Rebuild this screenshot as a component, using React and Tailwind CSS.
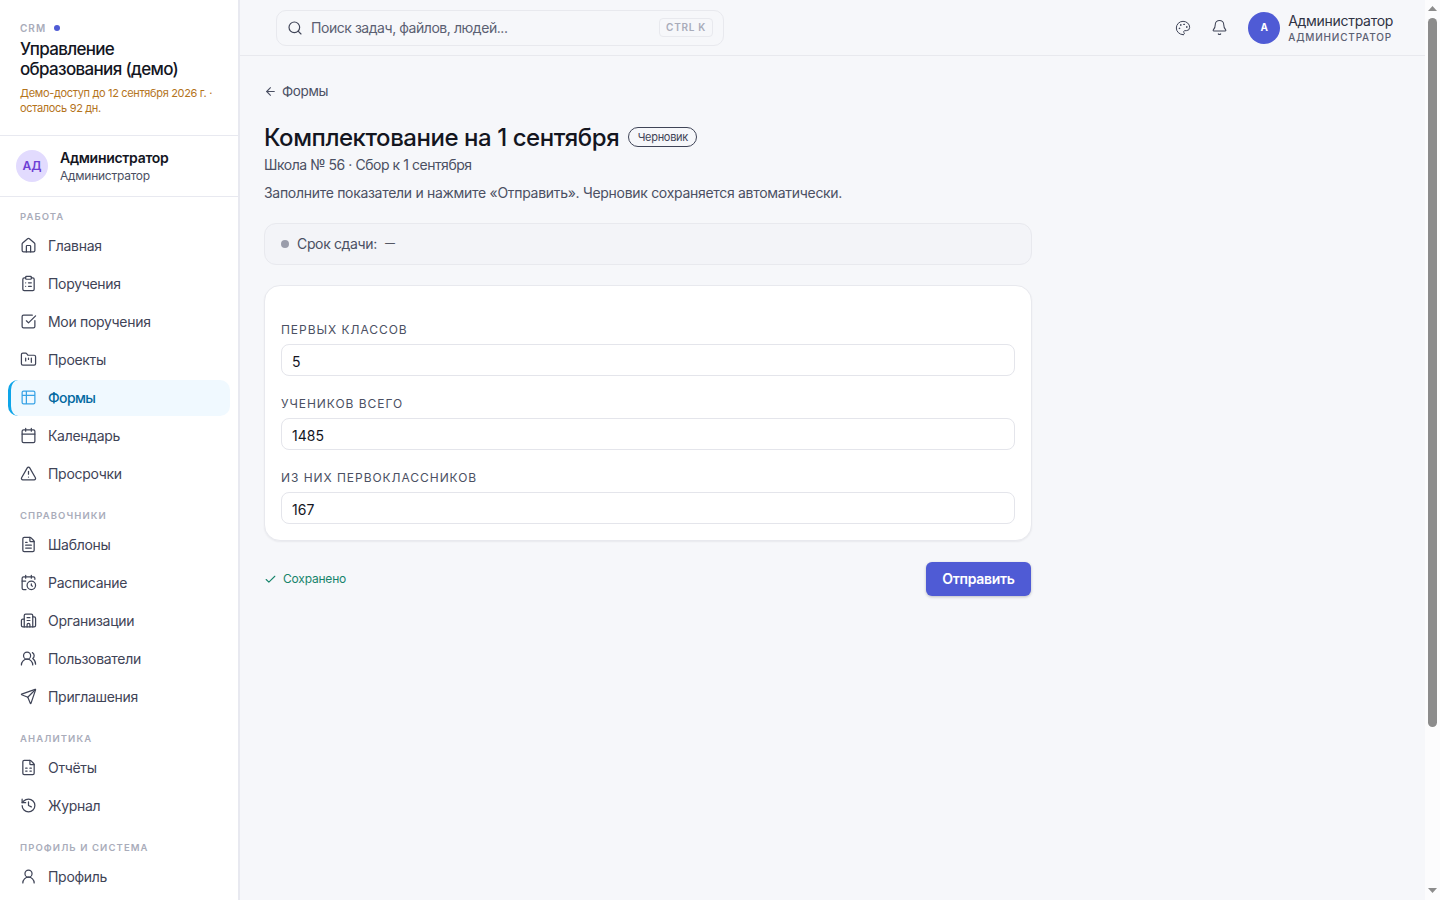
import React from "react";
import {
  ArrowLeft,
  Bell,
  Building2,
  CalendarClock,
  Calendar,
  Check,
  ClipboardList,
  FileSpreadsheet,
  FileText,
  FolderKanban,
  History,
  House,
  Palette,
  Search,
  Send,
  SquareCheckBig,
  Table2,
  TriangleAlert,
  UserRound,
  UsersRound,
} from "lucide-react";

const groups = [
  {
    title: "РАБОТА",
    items: [
      { label: "Главная", icon: House },
      { label: "Поручения", icon: ClipboardList },
      { label: "Мои поручения", icon: SquareCheckBig },
      { label: "Проекты", icon: FolderKanban },
      { label: "Формы", icon: Table2, active: true },
      { label: "Календарь", icon: Calendar },
      { label: "Просрочки", icon: TriangleAlert },
    ],
  },
  {
    title: "СПРАВОЧНИКИ",
    items: [
      { label: "Шаблоны", icon: FileText },
      { label: "Расписание", icon: CalendarClock },
      { label: "Организации", icon: Building2 },
      { label: "Пользователи", icon: UsersRound },
      { label: "Приглашения", icon: Send },
    ],
  },
  {
    title: "АНАЛИТИКА",
    items: [
      { label: "Отчёты", icon: FileSpreadsheet },
      { label: "Журнал", icon: History },
    ],
  },
  {
    title: "ПРОФИЛЬ И СИСТЕМА",
    items: [{ label: "Профиль", icon: UserRound }],
  },
];

const fields = [
  { label: "ПЕРВЫХ КЛАССОВ", value: "5" },
  { label: "УЧЕНИКОВ ВСЕГО", value: "1485" },
  { label: "ИЗ НИХ ПЕРВОКЛАССНИКОВ", value: "167" },
];

const NavItem = ({ item }) => {
  const Icon = item.icon;
  return (
    <div
      className={
        item.active
          ? "flex h-9 items-center gap-[11px] rounded-[10px] border-l-[3px] border-[#0ea5e9] bg-[#f0f9ff] pl-[9px] font-medium text-[#0369a1]"
          : "flex h-9 items-center gap-[11px] rounded-[10px] pl-3 text-[#3f4457]"
      }
    >
      <Icon size={17} strokeWidth={1.75} className={item.active ? "text-[#38a3e6]" : "text-[#3f4457]"} />
      <span className={item.active ? "text-[14px] tracking-[-0.6px]" : "text-[14px] tracking-[-0.3px]"}>{item.label}</span>
    </div>
  );
};

const Sidebar = () => (
  <aside className="h-screen w-[240px] shrink-0 overflow-hidden border-r-2 border-[#e8e9f0] bg-white">
    <div className="h-[136px] border-b border-[#e8e9f0] px-5 pt-[21px]">
      <div className="flex h-[14px] items-center gap-2">
        <span className="text-[10px] font-semibold tracking-[1px] text-[#a9acba]">CRM</span>
        <span className="h-[6px] w-[6px] rounded-full bg-[#4f5bd5]"></span>
      </div>
      <div className="mt-[4px] text-[17px] leading-[20px] font-medium tracking-[-0.67px] text-[#14161f]">
        Управление образования (демо)
      </div>
      <div className="mt-[7px] w-[200px] text-[11px] leading-[15px] tracking-[-0.33px] text-[#b4741c]">
        Демо-доступ до 12 сентября 2026 г. · осталось 92 дн.
      </div>
    </div>
    <div className="flex h-[61px] items-center gap-3 border-b border-[#e8e9f0] px-4">
      <div className="flex h-8 w-8 items-center justify-center rounded-full bg-[#e2dbfe] text-[12px] font-semibold text-[#6d3fd4]">
        АД
      </div>
      <div>
        <div className="text-[14px] leading-[18px] font-semibold tracking-[-0.3px] text-[#14161f]">Администратор</div>
        <div className="mt-[1px] text-[12px] leading-[16px] tracking-[-0.25px] text-[#4b5063]">Администратор</div>
      </div>
    </div>
    <nav className="flex flex-col gap-[17.5px] px-2 pt-[13px]">
      {groups.map((group) => (
        <div key={group.title}>
          <div className="flex h-[14px] items-center pl-3 text-[9.5px] font-semibold tracking-[1.1px] text-[#a9acba]">
            {group.title}
          </div>
          <div className="mt-[3.5px] flex flex-col gap-[2px]">
            {group.items.map((item) => (
              <NavItem key={item.label} item={item} />
            ))}
          </div>
        </div>
      ))}
    </nav>
  </aside>
);

const Topbar = () => (
  <header className="flex h-[56px] shrink-0 items-center justify-between border-b border-[#e8e9ee] pr-[32px] pl-[36px]">
    <div className="flex h-9 w-[448px] items-center rounded-[10px] border border-[#e8e9ee] bg-[#f6f7fa] pr-[10px] pl-[10px]">
      <Search size={16} strokeWidth={1.75} className="text-[#3f4457]" />
      <span className="ml-[8px] flex-1 text-[14px] tracking-[-0.45px] text-[#5b6072]">Поиск задач, файлов, людей...</span>
      <span className="flex h-[19px] items-center rounded-[4px] border border-[#e8e9ee] px-[6px] text-[10px] font-semibold tracking-[0.7px] text-[#a9acba]">
        CTRL K
      </span>
    </div>
    <div className="flex items-center">
      <Palette size={16} strokeWidth={1.5} className="text-[#3f4457]" />
      <Bell size={17} strokeWidth={1.5} className="ml-[20px] text-[#3f4457]" />
      <div className="ml-[20px] flex h-8 w-8 items-center justify-center rounded-full bg-[#4f5bd5] text-[10px] font-bold text-white">
        А
      </div>
      <div className="ml-2">
        <div className="text-[14px] leading-[18px] tracking-[-0.3px] text-[#2f3344]">Администратор</div>
        <div className="mt-[1px] text-[10px] leading-[13px] font-medium tracking-[0.8px] text-[#5b6072]">АДМИНИСТРАТОР</div>
      </div>
    </div>
  </header>
);

// the page scrollbar of the screenshot: arrows and thumb
const Scrollbar = () => (
  <div className="flex h-screen w-[15px] shrink-0 flex-col items-center bg-[#fcfcfd]">
    <svg width="9" height="5" viewBox="0 0 9 5" className="mt-[6px] shrink-0">
      <path d="M4.5 0L9 5H0z" fill="#8c8c8c" />
    </svg>
    <div className="mt-[7px] h-[709px] w-[9px] rounded-t-[5px] rounded-b-[5px] bg-[#8c8c8c]"></div>
    <svg width="9" height="5" viewBox="0 0 9 5" className="mt-auto mb-[7px] shrink-0">
      <path d="M0 0H9L4.5 5z" fill="#8c8c8c" />
    </svg>
  </div>
);

const App = () => {
  return (
    <div className="flex h-screen overflow-hidden bg-[#f6f7fa] font-['Inter','Noto_Sans',sans-serif]">
      <Sidebar />
      <div className="h-screen flex-1 overflow-hidden">
        <Topbar />
        <main className="w-[816px] px-6 pt-[26px]">
          <div className="flex h-[18px] items-center gap-[5px] text-[13.5px] tracking-[-0.35px] text-[#4b5063]">
            <ArrowLeft size={13} strokeWidth={2} />
            <span>Формы</span>
          </div>
          <div className="mt-[23px] flex h-[30px] items-center gap-[9px]">
            <h1 className="text-[24px] leading-[30px] font-medium tracking-[-0.45px] text-[#14161f]">Комплектование на 1 сентября</h1>
            <span className="mb-[2px] flex h-5 items-center rounded-full border border-[#3f4457] px-[8.5px] text-[11px] tracking-[-0.3px] text-[#3f4457]">
              Черновик
            </span>
          </div>
          <div className="mt-[2px] text-[14px] leading-[20px] tracking-[-0.45px] text-[#4b5063]">Школа № 56 · Сбор к 1 сентября</div>
          <div className="mt-[8px] text-[14px] leading-[20px] tracking-[-0.3px] text-[#4b5063]">
            Заполните показатели и нажмите «Отправить». Черновик сохраняется автоматически.
          </div>
          <div className="mt-[20px] flex h-[42px] items-center rounded-[12px] border border-[#e8e9ee] bg-[#f3f4f8] px-4">
            <span className="h-2 w-2 rounded-full bg-[#9a9dab]"></span>
            <span className="mb-[2px] ml-2 text-[14px] tracking-[-0.35px] text-[#4b5063]">Срок сдачи:</span>
            <span className="mb-[2px] ml-2 text-[10px] text-[#2f3344]">—</span>
          </div>
          <div className="mt-[20px] flex h-[256px] flex-col gap-[20px] rounded-[16px] border border-[#e8e9ee] bg-white px-4 pt-[36px] shadow-[0_1px_2px_rgba(20,22,31,0.06)]">
            {fields.map((field) => (
              <div key={field.label}>
                <div className="text-[12px] leading-[16px] font-normal tracking-[0.95px] text-[#4b5063]">{field.label}</div>
                <div className="mt-[6px] flex h-8 items-center rounded-[8px] border border-[#e4e5eb] bg-white px-[10px] pt-[2px] text-[14px] text-[#14161f]">
                  {field.value}
                </div>
              </div>
            ))}
          </div>
          <div className="mt-[21px] flex items-center justify-between">
            <div className="flex items-center gap-[6px] text-[12px] tracking-[-0.2px] text-[#16846b]">
              <Check size={13} strokeWidth={2} />
              <span>Сохранено</span>
            </div>
            <button className="mr-[1px] flex h-[34px] w-[105px] items-center justify-center rounded-[6px] bg-[#4f5bd5] pb-[2px] text-[14px] font-semibold tracking-[-0.3px] text-white shadow-[0_1px_3px_rgba(20,22,31,0.25)]">
              Отправить
            </button>
          </div>
        </main>
      </div>
      <Scrollbar />
    </div>
  );
};

export default App;
